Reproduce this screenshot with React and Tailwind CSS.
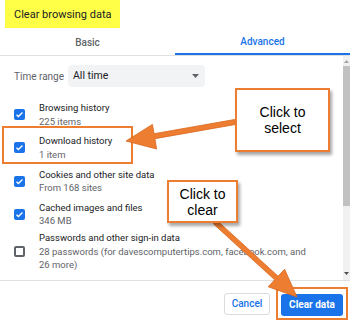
import React from "react";

const rows = [
  { title: "Browsing history", sub: "225 items", checked: true },
  { title: "Download history", sub: "1 item", checked: true },
  { title: "Cookies and other site data", sub: "From 168 sites", checked: true },
  { title: "Cached images and files", sub: "346 MB", checked: true },
  {
    title: "Passwords and other sign-in data",
    sub: "28 passwords (for davescomputertips.com, facebook.com, and 26 more)",
    checked: false,
  },
];

function Checkbox({ checked }) {
  if (!checked) {
    return <div className="w-[11px] h-[11px] shrink-0 rounded-[2px] border-2 border-[#5f6368]" />;
  }
  return (
    <div className="w-[11px] h-[11px] shrink-0 rounded-[2px] bg-[#1a73e8] flex items-center justify-center">
      <svg width="9" height="9" viewBox="0 0 24 24" fill="none">
        <path d="M4 12.5l5 5L20 6.5" stroke="white" strokeWidth="3.5" />
      </svg>
    </div>
  );
}

function Callout({ className, children }) {
  return (
    <div
      className={`absolute bg-white border-2 border-[#ed7d31] shadow-[2px_3px_3px_rgba(0,0,0,0.35)] flex items-center justify-center text-center text-[14px] leading-[16px] text-black font-['Liberation_Sans',Arial,sans-serif] ${className}`}
    >
      {children}
    </div>
  );
}

export default function App() {
  return (
    <div className="relative w-[350px] h-[326px] bg-white overflow-hidden font-['Roboto',sans-serif] text-[#202124]">
      {/* header */}
      <div className="h-[30px] pl-[5px]">
        <div className="h-[28px] w-[115px] bg-[#ffff48] flex items-center pl-[9px] pt-[2px] text-[11px] whitespace-nowrap">
          Clear browsing data
        </div>
      </div>

      {/* tabs */}
      <div className="h-[26px] flex border-b border-[#e0e0e0] text-[10px] font-medium">
        <div className="flex-1 flex items-center justify-center text-[#5f6368]">Basic</div>
        <div className="flex-1 flex items-center justify-center text-[#1a73e8] border-b-2 border-[#1a73e8]">
          Advanced
        </div>
      </div>

      {/* body */}
      <div className="h-[224px] flex">
        <div className="flex-1 pt-[9px] pl-[14px]">
          <div className="h-[22px] flex items-center">
            <span className="w-[54px] text-[10px] text-[#5f6368]">Time range</span>
            <div className="w-[137px] h-[22px] bg-[#f1f3f4] rounded-[4px] flex items-center justify-between pl-[5px] pr-[6px] text-[10.5px]">
              <span>All time</span>
              <svg width="7" height="4" viewBox="0 0 7 4">
                <path d="M0 0h7L3.5 4z" fill="#5f6368" />
              </svg>
            </div>
          </div>
          <div className="mt-[11px]">
            {rows.map((r) => (
              <div key={r.title} className="min-h-[33.25px] flex items-center gap-[14px]">
                <Checkbox checked={r.checked} />
                <div className="text-[9.5px] leading-[13.5px] pr-[28px]">
                  <div className="text-[#202124]">{r.title}</div>
                  <div className="text-[#5f6368]">{r.sub}</div>
                </div>
              </div>
            ))}
          </div>
        </div>
        {/* scrollbar */}
        <div className="w-[7px] bg-[#f1f1f1] flex flex-col items-center pt-[4px] pb-[5px]">
          <svg width="5" height="3" viewBox="0 0 5 3">
            <path d="M0 3h5L2.5 0z" fill="#a3a3a3" />
          </svg>
          <div className="w-full h-[140px] mt-[3px] bg-[#c1c1c1]" />
          <div className="flex-1" />
          <svg width="5" height="3" viewBox="0 0 5 3">
            <path d="M0 0h5L2.5 3z" fill="#505050" />
          </svg>
        </div>
      </div>

      {/* footer */}
      <div className="h-[46px] border-t border-[#e0e0e0] flex items-center justify-end gap-[6px] pr-[2px]">
        <button className="w-[46px] h-[22px] border border-[#dadce0] rounded-[3px] text-[10px] font-medium text-[#1a73e8]">
          Cancel
        </button>
        <div className="border-2 border-[#ed7d31] px-[3px] py-[2.5px]">
          <button className="w-[62px] h-[22px] bg-[#1a73e8] rounded-[3px] text-[10px] font-bold text-white">
            Clear data
          </button>
        </div>
      </div>

      {/* annotations */}
      <div className="absolute left-[2px] top-[126px] w-[131px] h-[38px] border-2 border-[#ed7d31]" />
      <svg className="absolute left-0 top-0" width="350" height="326" viewBox="0 0 350 326">
        <g fill="#ed7d31" stroke="#d9661c" strokeWidth="0.8" strokeLinejoin="round">
          <polygon points="235.4,124.5 154.9,138.7 156.6,149 126,141 152.4,124.4 154.1,133.7 234.6,119.5" />
          <polygon points="213.3,223.8 274.7,279.8 268.2,286.8 297,297 284.6,269.2 278.1,276.2 216.7,220.2" />
        </g>
      </svg>
      <Callout className="left-[235px] top-[88px] w-[95px] h-[64px]">
        Click to
        <br />
        select
      </Callout>
      <Callout className="left-[167px] top-[180px] w-[71px] h-[43px]">
        Click to
        <br />
        clear
      </Callout>
    </div>
  );
}
